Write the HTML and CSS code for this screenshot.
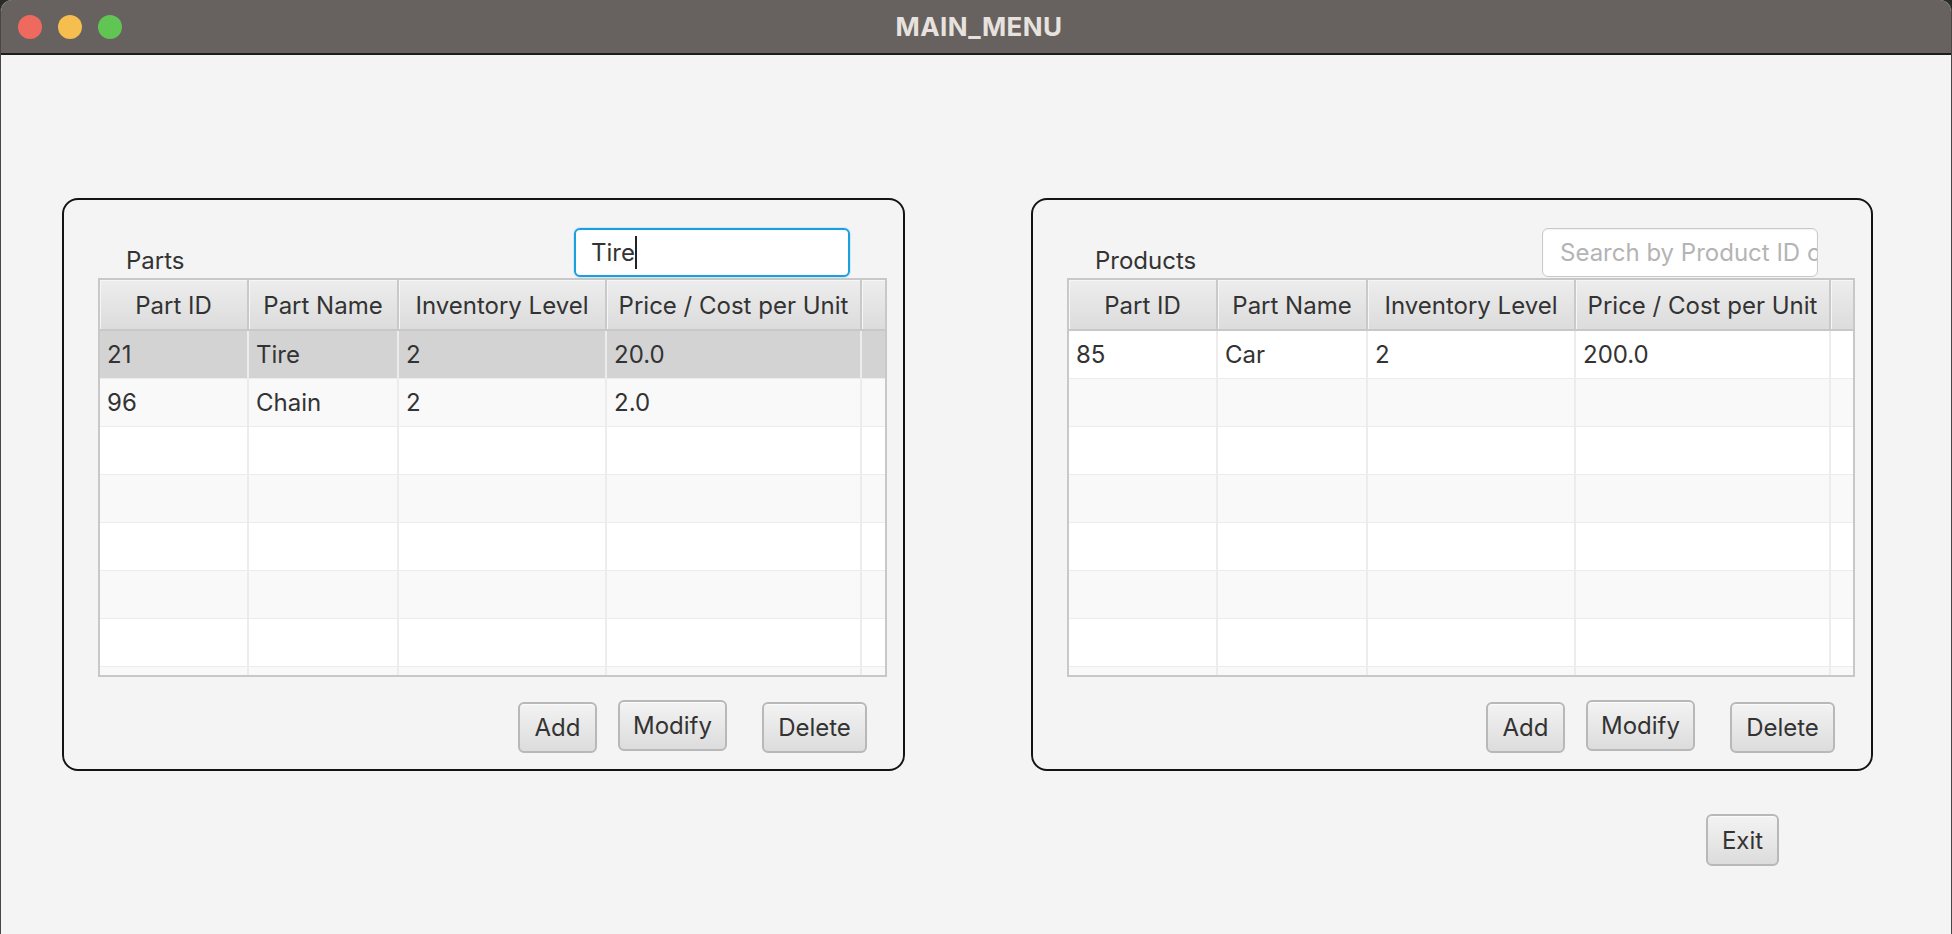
FILE: index.html
```html
<!DOCTYPE html>
<html lang="en">
<head>
<meta charset="utf-8">
<title>MAIN_MENU</title>
<link rel="stylesheet" href="styles.css">
</head>
<body>
<div class="window">
  <header class="titlebar">
    <div class="lights">
      <span class="light red"></span>
      <span class="light yellow"></span>
      <span class="light green"></span>
    </div>
    <div class="title">MAIN_MENU</div>
    <div class="spacer"></div>
  </header>
  <main class="content">
    <div class="panels">
      <section class="panel">
        <div class="panel-head">
          <span class="panel-label">Parts</span>
          <div class="search focused"><span class="search-text">Tire</span><span class="caret"></span></div>
        </div>
        <div class="table">
          <div class="row head">
            <div class="hcell">Part ID</div>
            <div class="hcell">Part Name</div>
            <div class="hcell">Inventory Level</div>
            <div class="hcell">Price / Cost per Unit</div>
            <div class="hcell filler"></div>
          </div>
          <div class="row selected"><div class="cell">21</div><div class="cell">Tire</div><div class="cell">2</div><div class="cell">20.0</div><div class="cell"></div></div>
          <div class="row alt"><div class="cell">96</div><div class="cell">Chain</div><div class="cell">2</div><div class="cell">2.0</div><div class="cell"></div></div>
          <div class="row"><div class="cell"></div><div class="cell"></div><div class="cell"></div><div class="cell"></div><div class="cell"></div></div>
          <div class="row alt"><div class="cell"></div><div class="cell"></div><div class="cell"></div><div class="cell"></div><div class="cell"></div></div>
          <div class="row"><div class="cell"></div><div class="cell"></div><div class="cell"></div><div class="cell"></div><div class="cell"></div></div>
          <div class="row alt"><div class="cell"></div><div class="cell"></div><div class="cell"></div><div class="cell"></div><div class="cell"></div></div>
          <div class="row"><div class="cell"></div><div class="cell"></div><div class="cell"></div><div class="cell"></div><div class="cell"></div></div>
          <div class="row alt"><div class="cell"></div><div class="cell"></div><div class="cell"></div><div class="cell"></div><div class="cell"></div></div>
        </div>
        <div class="actions">
          <button class="btn btn-add">Add</button>
          <button class="btn btn-modify">Modify</button>
          <button class="btn btn-delete">Delete</button>
        </div>
      </section>

      <section class="panel">
        <div class="panel-head">
          <span class="panel-label">Products</span>
          <div class="search"><span class="placeholder">Search by Product ID or Name</span></div>
        </div>
        <div class="table">
          <div class="row head">
            <div class="hcell">Part ID</div>
            <div class="hcell">Part Name</div>
            <div class="hcell">Inventory Level</div>
            <div class="hcell">Price / Cost per Unit</div>
            <div class="hcell filler"></div>
          </div>
          <div class="row"><div class="cell">85</div><div class="cell">Car</div><div class="cell">2</div><div class="cell">200.0</div><div class="cell"></div></div>
          <div class="row alt"><div class="cell"></div><div class="cell"></div><div class="cell"></div><div class="cell"></div><div class="cell"></div></div>
          <div class="row"><div class="cell"></div><div class="cell"></div><div class="cell"></div><div class="cell"></div><div class="cell"></div></div>
          <div class="row alt"><div class="cell"></div><div class="cell"></div><div class="cell"></div><div class="cell"></div><div class="cell"></div></div>
          <div class="row"><div class="cell"></div><div class="cell"></div><div class="cell"></div><div class="cell"></div><div class="cell"></div></div>
          <div class="row alt"><div class="cell"></div><div class="cell"></div><div class="cell"></div><div class="cell"></div><div class="cell"></div></div>
          <div class="row"><div class="cell"></div><div class="cell"></div><div class="cell"></div><div class="cell"></div><div class="cell"></div></div>
          <div class="row alt"><div class="cell"></div><div class="cell"></div><div class="cell"></div><div class="cell"></div><div class="cell"></div></div>
        </div>
        <div class="actions">
          <button class="btn btn-add">Add</button>
          <button class="btn btn-modify">Modify</button>
          <button class="btn btn-delete">Delete</button>
        </div>
      </section>
    </div>
    <div class="footer">
      <button class="btn btn-exit">Exit</button>
    </div>
  </main>
</div>
</body>
</html>
```

FILE: styles.css
```css
* { box-sizing: border-box; }

html, body {
  margin: 0;
  padding: 0;
  height: 100%;
  background: #2a2a2a;
}

body {
  font-family: Inter, "Noto Sans", "Liberation Sans", sans-serif;
  color: #333333;
  overflow: hidden;
}

.window {
  height: 934px;
  width: 1952px;
  display: flex;
  flex-direction: column;
  background: #f4f4f4;
  border-radius: 12px 12px 0 0;
  border-left: 1px solid #4a4644;
  border-right: 1px solid #4a4644;
  overflow: hidden;
}

.titlebar {
  height: 55px;
  flex: 0 0 55px;
  background: #67625f;
  border-bottom: 2px solid #1d1d1d;
  display: grid;
  grid-template-columns: 1fr auto 1fr;
  align-items: center;
}

.lights {
  display: flex;
  gap: 16px;
  padding-left: 17px;
  padding-top: 0;
}

.light {
  width: 24px;
  height: 24px;
  border-radius: 50%;
}
.red { background: #ee6a5f; }
.yellow { background: #f5be4f; }
.green { background: #61c554; }

.title {
  font-weight: 700;
  font-size: 26px;
  letter-spacing: 0.4px;
  color: #e7e2de;
  padding-left: 6px;
  padding-bottom: 1px;
}

.content {
  flex: 1;
  padding: 143px 0 0 61px;
}

.panels {
  display: flex;
  gap: 126px;
}

.panel {
  width: 843px;
  height: 573px;
  border: 2px solid #141414;
  border-radius: 16px;
  padding: 28px 16px 0 34px;
  display: flex;
  flex-direction: column;
}

.panel + .panel { width: 842px; }

.panel-head {
  height: 50px;
  display: flex;
  align-items: flex-end;
}

.panel-label {
  font-size: 24px;
  line-height: 24px;
  margin-left: 28px;
  margin-bottom: 5px;
  color: #333;
}

.search {
  margin-left: auto;
  margin-right: 37px;
  align-self: flex-start;
  width: 276px;
  height: 49px;
  background: #ffffff;
  border: 1px solid #c9c9c9;
  border-radius: 6px;
  display: flex;
  align-items: center;
  padding-left: 17px;
  overflow: hidden;
  white-space: nowrap;
  box-shadow: inset 0 1px 2px rgba(0,0,0,0.06);
}

.search.focused {
  border: 2px solid #1aa0dc;
  box-shadow: 0 0 0 1px #cfe9f5;
  padding-left: 15px;
}

.search-text {
  font-size: 24px;
  color: #333;
}

.caret {
  display: inline-block;
  width: 2px;
  height: 33px;
  background: #222;
  margin-left: 0;
}

.placeholder {
  font-size: 24px;
  color: #b4b4b4;
}

.table {
  height: 399px;
  border: 2px solid #c8c8c8;
  background: #ffffff;
  overflow: hidden;
}

.row {
  display: grid;
  grid-template-columns: 149px 150px 208px 255px 1fr;
  height: 48px;
  background: #ffffff;
  border-bottom: 1px solid #ececec;
}

.row.alt { background: #f9f9f9; }
.row.selected { background: #d3d3d3; }

.row.head {
  height: 51px;
  border-bottom: 2px solid #c8c8c8;
  background: linear-gradient(#ededed, #dcdcdc);
}

.hcell {
  border-right: 2px solid #c9c9c9;
  box-shadow: inset 1px 1px 0 #f6f6f6;
  display: flex;
  align-items: center;
  justify-content: center;
  font-size: 24px;
  color: #333;
  white-space: nowrap;
  padding-top: 2px;
}

.hcell.filler { border-right: none; }

.cell {
  border-right: 2px solid #ececec;
  display: flex;
  align-items: center;
  padding-left: 7px;
  font-size: 24px;
  color: #333;
}

.cell:last-child { border-right: none; }

.actions {
  display: flex;
  justify-content: flex-end;
  align-items: flex-start;
  margin-top: 23px;
  padding-right: 20px;
}

.btn {
  font-family: inherit;
  font-size: 24px;
  color: #333;
  height: 51px;
  padding: 0;
  border: 2px solid #b8b8b8;
  border-radius: 6px;
  background: linear-gradient(#f3f3f3, #dcdcdc);
  box-shadow: inset 0 1px 0 #fbfbfb;
  cursor: default;
}

.btn-add { width: 79px; margin-top: 2px; }
.btn-modify { width: 109px; margin-left: 21px; }
.btn-delete { width: 105px; margin-left: 35px; margin-top: 2px; }

.footer {
  width: 1811px;
  display: flex;
  justify-content: flex-end;
  padding-right: 94px;
  margin-top: 43px;
}

.btn-exit { width: 73px; height: 52px; }
```
